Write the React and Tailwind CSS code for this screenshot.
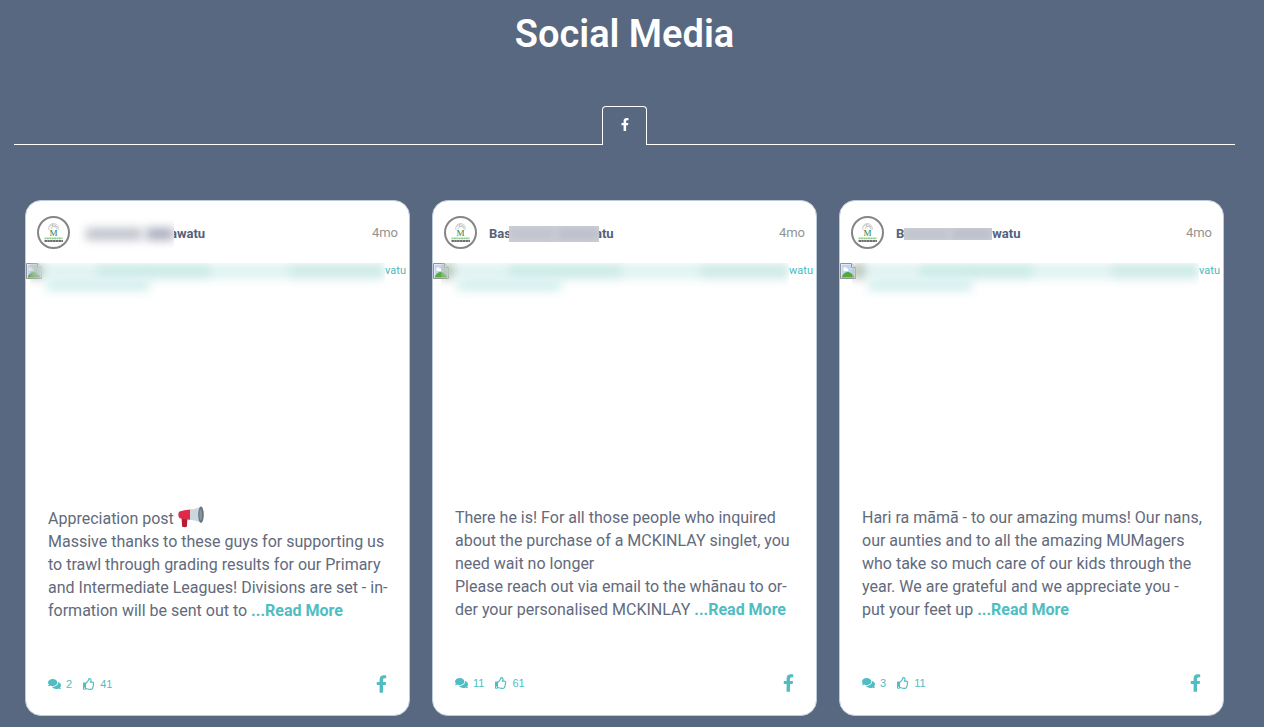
import React from 'react';
import { FaComments, FaFacebookF, FaRegThumbsUp } from 'react-icons/fa';

const posts = [
  {
    id: 1,
    nameStart: '',
    nameEnd: 'awatu',
    nameBlur: '-ml-1 -mr-1 h-8 w-24',
    nameSolid: false,
    altEnd: 'vatu',
    altBlur: '-ml-3',
    lines: [
      'Massive thanks to these guys for supporting us',
      'to trawl through grading results for our Primary',
      'and Intermediate Leagues! Divisions are set - in-',
    ],
    title: 'Appreciation post',
    lastLine: 'formation will be sent out to',
    comments: 2,
    likes: 41,
  },
  {
    id: 2,
    nameStart: 'Bas',
    nameEnd: 'atu',
    nameBlur: '-ml-0.5 -mr-1 h-4 w-[90px]',
    nameSolid: true,
    altEnd: 'watu',
    altBlur: '-ml-2',
    lines: [
      'There he is! For all those people who inquired',
      'about the purchase of a MCKINLAY singlet, you',
      'need wait no longer',
      'Please reach out via email to the whānau to or-',
    ],
    lastLine: 'der your personalised MCKINLAY',
    comments: 11,
    likes: 61,
  },
  {
    id: 3,
    nameStart: 'B',
    nameEnd: 'watu',
    nameBlur: 'h-3 w-[88px]',
    nameSolid: true,
    altEnd: 'vatu',
    altBlur: '-ml-1',
    lines: [
      'Hari ra māmā - to our amazing mums! Our nans,',
      'our aunties and to all the amazing MUMagers',
      'who take so much care of our kids through the',
      'year. We are grateful and we appreciate you -',
    ],
    lastLine: 'put your feet up',
    comments: 3,
    likes: 11,
  },
];

const Avatar = () => (
  <svg viewBox="0 0 33 33" className="h-[33px] w-[33px] shrink-0" aria-hidden="true">
    <circle cx="16.5" cy="16.5" r="15.5" fill="#fff" stroke="#858585" strokeWidth="2" />
    <g fill="none" stroke="#b5b5b5" strokeWidth="0.7">
      <path d="M12 14a4.8 4.8 0 1 1 9 0" />
      <path d="M12.5 10.5l3-2 3 1 2 2M14 13l1.5-2.5h3l1.5 2.5M15.5 8.5v2M18.5 9.5v1" />
    </g>
    <text x="16.5" y="20" textAnchor="middle" fontSize="9" fontFamily="Liberation Serif, serif" fill="#26833e">M</text>
    <path d="M7.5 22.3h18" stroke="#8fca8a" strokeWidth="1.8" strokeDasharray="2 0.4" />
    <path d="M7.5 25h18.5" stroke="#404040" strokeWidth="1.5" strokeDasharray="2.5 0.3" />
  </svg>
);

const BrokenImage = () => (
  <svg viewBox="0 0 16 16" className="h-4 w-4 shrink-0" aria-hidden="true">
    <path d="M.5 15.500V.5h11l4 4v11z" fill="#fff" stroke="#929292" />
    <path d="M1.500 1.500h9.500v4h3.500v9h-13z" fill="#c3d4f3" />
    <path d="M3.500 6a1.500 1.500 0 0 1 3-.5 1.300 1.300 0 0 1 1 2.500H3.500z" fill="#fff" />
    <path d="M1.500 14.500c1-3.500 4-5.500 6-5.500s6 2 7 5.500z" fill="#55a83c" />
    <path d="M11.500.5v4h4" fill="#fff" stroke="#929292" />
  </svg>
);

const Megaphone = () => (
  <svg viewBox="0 0 26 22" className="inline-block h-[22px] w-[26px] align-text-bottom" role="img" aria-label="megaphone">
    <path d="M3.500 11h6l-.6 9.300c-.1 1.200-4.600 1.200-4.800 0z" fill="#b51d35" />
    <path d="M1.500 5.500Q6 4 12.500 3.500v10.300Q7 13.800 2 12.300C0 11.500-.2 6.500 1.500 5.500z" fill="#df2946" />
    <path d="M12 3.500Q18 3 23 .5v16.300q-5-2.500-11-3z" fill="#ccd6dd" />
    <ellipse cx="23" cy="8.700" rx="2.800" ry="8.200" fill="#66757f" />
    <ellipse cx="22.700" cy="8.700" rx="1.300" ry="5.500" fill="#8594a0" />
  </svg>
);

const NameBlur = ({ className, solid }) => (
  <span className={`relative z-10 flex items-center overflow-hidden ${solid ? 'bg-[#cfd1d8]' : 'bg-white'} ${className}`}>
    {solid ? (
      <>
        <span className="h-3 w-1/2 bg-[#c0c3cc] blur-xs" />
        <span className="ml-1 h-3 flex-1 bg-[#bbbec9] blur-xs" />
      </>
    ) : (
      <>
        <span className="ml-2 h-3 w-14 bg-[#bfc2cc] blur-[5px]" />
        <span className="ml-1 h-3 flex-1 bg-[#aaaebd] blur-[5px]" />
      </>
    )}
  </span>
);

const AltBlur = ({ className }) => (
  <div className={`relative z-10 h-12 flex-1 overflow-hidden ${className}`}>
    <div className="flex h-4 bg-[#e0f3f2] blur-[5px]">
      <span className="w-3 bg-[#b5c4b8]" />
      <span className="ml-14 w-28 bg-[#cdebe8]" />
      <span className="ml-20 flex-1 bg-[#cfebe8]" />
    </div>
    <div className="ml-4 h-3 w-26 bg-[#d4efee] blur-[5px]" />
  </div>
);

const PostCard = ({ post }) => (
  <article className="flex flex-col overflow-hidden rounded-2xl border border-[#bccbdc] bg-white">
    <header className="flex items-center px-[11px] pt-[15px]">
      <Avatar />
      <div className="ml-3 flex flex-1 items-center pt-[3px] text-[13px] leading-4 font-bold text-[#53617b]">
        <span>{post.nameStart}</span>
        <span className="-my-2 flex items-center">
          <NameBlur className={post.nameBlur} solid={post.nameSolid} />
        </span>
        <span>{post.nameEnd}</span>
      </div>
      <time className="text-[13px] text-[#929292]">4mo</time>
    </header>

    <a href="#post" className="mt-[14px] flex h-[243px] items-start pr-[3px] text-[11px] leading-4 text-[#4ab9bd]">
      <BrokenImage />
      <AltBlur className={post.altBlur} />
      <span>{post.altEnd}</span>
    </a>

    <div className="px-[22px] text-base leading-[23px] whitespace-nowrap text-[#626a7c]">
      {post.title && (
        <p className="h-6">
          {post.title} <Megaphone />
        </p>
      )}
      {post.lines.map((line) => (
        <p key={line}>{line}</p>
      ))}
      <p>
        {post.lastLine}{' '}
        <a href="#more" className="font-bold text-[#4fbdc2]">...Read More</a>
      </p>
    </div>

    <footer className="flex items-center px-[22px] pt-[53px] pb-[22px] font-['Liberation_Sans',sans-serif] text-[11px] text-[#4fbdc2]">
      <FaComments className="h-3 w-[13px]" />
      <span className="ml-[5px]">{post.comments}</span>
      <FaRegThumbsUp className="ml-[11px] h-3 w-3" />
      <span className="ml-[5px]">{post.likes}</span>
      <a href="#facebook" aria-label="View on Facebook" className="ml-auto">
        <FaFacebookF className="h-[18px] w-[11px]" />
      </a>
    </footer>
  </article>
);

const App = () => {
  return (
    <section className="min-h-screen bg-[#586880] pr-[29px] pb-[11px] pl-[14px] font-[Roboto,sans-serif]">
      <h2 className="pt-[14px] text-center text-[38px] leading-10 font-semibold text-white">Social Media</h2>

      <div className="mt-[52px] flex">
        <div className="flex-1 border-b border-white" />
        <button
          aria-label="Facebook"
          className="flex h-[39px] w-[45px] items-center justify-center rounded-t border border-b-0 border-white pb-[3px] text-white"
        >
          <FaFacebookF className="h-[13px] w-3" />
        </button>
        <div className="flex-1 border-b border-white" />
      </div>

      <div className="mt-[55px] grid grid-cols-3 gap-[22px] px-[11px]">
        {posts.map((post) => (
          <PostCard key={post.id} post={post} />
        ))}
      </div>
    </section>
  );
};

export default App;
